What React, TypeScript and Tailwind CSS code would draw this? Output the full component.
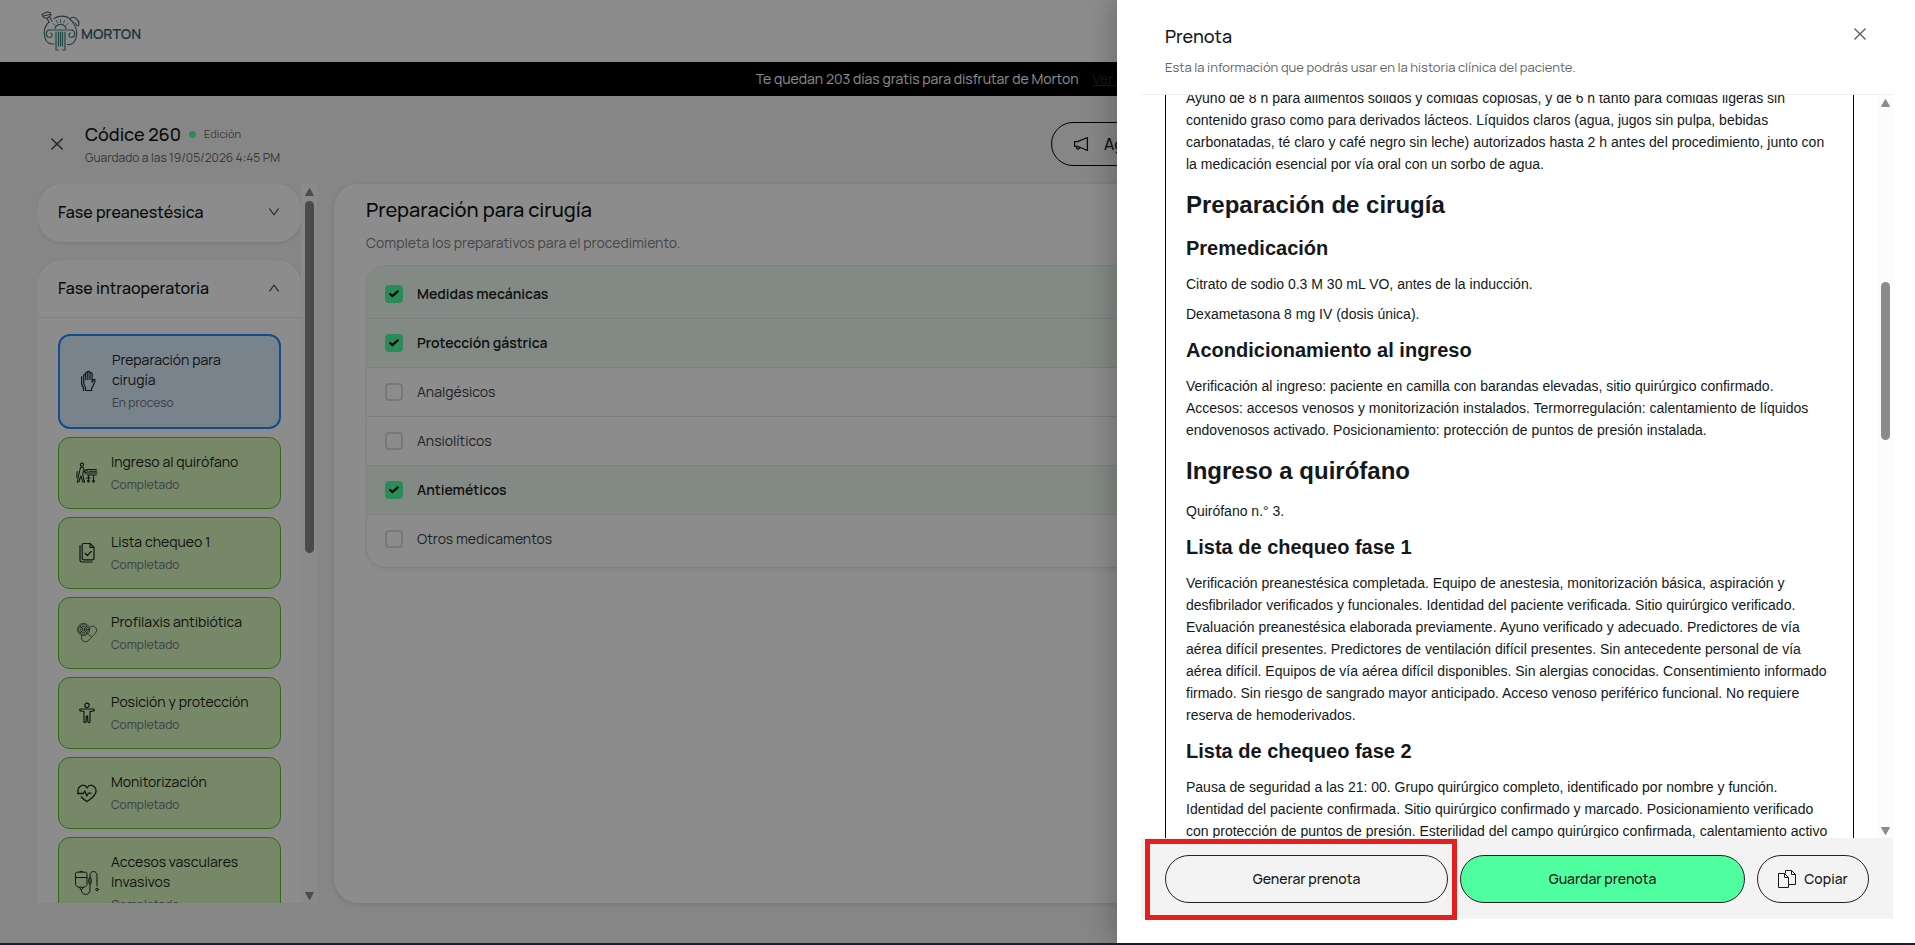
import { useState, type ReactNode } from 'react'
import { AiOutlineClose, AiOutlineDown, AiOutlineNotification, AiOutlineUp } from 'react-icons/ai'
import clsx from 'clsx'

type Step = { title: string; status: string; icon: ReactNode; active?: boolean }
type NoteBlock = { type: 'h1' | 'h2' | 'p'; text: string }

const steps: Step[] = [
  { title: 'Preparación para cirugía', status: 'En proceso', icon: <HandIcon />, active: true },
  { title: 'Ingreso al quirófano', status: 'Completado', icon: <StretcherIcon /> },
  { title: 'Lista chequeo 1', status: 'Completado', icon: <ChecklistIcon /> },
  { title: 'Profilaxis antibiótica', status: 'Completado', icon: <CapsuleIcon /> },
  { title: 'Posición y protección', status: 'Completado', icon: <BodyIcon /> },
  { title: 'Monitorización', status: 'Completado', icon: <HeartIcon /> },
  { title: 'Accesos vasculares Invasivos', status: 'Completado', icon: <DripIcon /> },
]

const initialOptions = [
  { label: 'Medidas mecánicas', checked: true },
  { label: 'Protección gástrica', checked: true },
  { label: 'Analgésicos', checked: false },
  { label: 'Ansiolíticos', checked: false },
  { label: 'Antieméticos', checked: true },
  { label: 'Otros medicamentos', checked: false },
]

const note: NoteBlock[] = [
  { type: 'p', text: 'Ayuno de 8 h para alimentos sólidos y comidas copiosas, y de 6 h tanto para comidas ligeras sin contenido graso como para derivados lácteos. Líquidos claros (agua, jugos sin pulpa, bebidas carbonatadas, té claro y café negro sin leche) autorizados hasta 2 h antes del procedimiento, junto con la medicación esencial por vía oral con un sorbo de agua.' },
  { type: 'h1', text: 'Preparación de cirugía' },
  { type: 'h2', text: 'Premedicación' },
  { type: 'p', text: 'Citrato de sodio 0.3 M 30 mL VO, antes de la inducción.' },
  { type: 'p', text: 'Dexametasona 8 mg IV (dosis única).' },
  { type: 'h2', text: 'Acondicionamiento al ingreso' },
  { type: 'p', text: 'Verificación al ingreso: paciente en camilla con barandas elevadas, sitio quirúrgico confirmado. Accesos: accesos venosos y monitorización instalados. Termorregulación: calentamiento de líquidos endovenosos activado. Posicionamiento: protección de puntos de presión instalada.' },
  { type: 'h1', text: 'Ingreso a quirófano' },
  { type: 'p', text: 'Quirófano n.° 3.' },
  { type: 'h2', text: 'Lista de chequeo fase 1' },
  { type: 'p', text: 'Verificación preanestésica completada. Equipo de anestesia, monitorización básica, aspiración y desfibrilador verificados y funcionales. Identidad del paciente verificada. Sitio quirúrgico verificado. Evaluación preanestésica elaborada previamente. Ayuno verificado y adecuado. Predictores de vía aérea difícil presentes. Predictores de ventilación difícil presentes. Sin antecedente personal de vía aérea difícil. Equipos de vía aérea difícil disponibles. Sin alergias conocidas. Consentimiento informado firmado. Sin riesgo de sangrado mayor anticipado. Acceso venoso periférico funcional. No requiere reserva de hemoderivados.' },
  { type: 'h2', text: 'Lista de chequeo fase 2' },
  { type: 'p', text: 'Pausa de seguridad a las 21: 00. Grupo quirúrgico completo, identificado por nombre y función. Identidad del paciente confirmada. Sitio quirúrgico confirmado y marcado. Posicionamiento verificado con protección de puntos de presión. Esterilidad del campo quirúrgico confirmada, calentamiento activo' },
]

function HandIcon() {
  return (
    <svg width="24" height="24" viewBox="0 0 24 24" fill="none" stroke="currentColor" strokeWidth="1.2" strokeLinecap="round" strokeLinejoin="round">
      <path d="M9.500 21.500v-3C8.300 17 7.700 15.500 7.700 13.700V6.500c0-1.500 2-1.500 2 0V11V4.200c0-1.500 2.100-1.500 2.100 0V10.500V3.400c0-1.500 2.200-1.500 2.200 0V10.500V4.800c0-1.500 2.100-1.500 2.100 0v8.400l1.300-2.200c.8-1.200 2.100-.5 1.700.7l-1.800 4.700c-.4 1-.9 1.600-1.600 2.200v2.900z" />
      <path d="M5.600 7.500v6.800c0 1.600.6 3.100 1.900 4.400v2.800" />
    </svg>
  )
}

function StretcherIcon() {
  return (
    <svg width="24" height="24" viewBox="0 0 24 24" fill="none" stroke="currentColor" strokeWidth="1.100" strokeLinecap="round" strokeLinejoin="round">
      <circle cx="7" cy="3.700" r="1.600" />
      <path d="M5.600 6.200L3.800 13.500l-1.500 7.500h1.500l2-6 2.200 6h1.500L7.700 13.300l.8-3.500 2.500 1.900M5.600 6.200h2.200l1.500 2.800 3.200 1M2.200 10.500l-.6 6" />
      <path d="M11.500 8.500h10M10 12h12M12 14h9.500M14 10.200h7.500M13.500 14v5.500M18.500 14v5.500M11.500 17h4" />
      <circle cx="13.500" cy="20.300" r=".9" />
      <circle cx="18.500" cy="20.300" r=".9" />
    </svg>
  )
}

function ChecklistIcon() {
  return (
    <svg width="24" height="24" viewBox="0 0 24 24" fill="none" stroke="currentColor" strokeWidth="1.200" strokeLinecap="round" strokeLinejoin="round">
      <path d="M8.500 2.500h6.500L19 6.500v11c0 .8-.5 1.300-1.300 1.300H8.500c-.8 0-1.300-.5-1.300-1.300V3.800c0-.8.5-1.300 1.300-1.300z" />
      <path d="M15 2.500v4h4M10 12.300l2.300 2.200 3.800-4M5 4.500v14.800c0 1 .7 1.700 1.700 1.700H17" />
    </svg>
  )
}

function CapsuleIcon() {
  return (
    <svg width="24" height="24" viewBox="0 0 24 24" fill="none" stroke="currentColor" strokeWidth=".7" strokeLinecap="round">
      <circle cx="8.500" cy="8.500" r="6" strokeWidth="1" strokeDasharray=".6 1.200" />
      <circle cx="8.500" cy="8.500" r="4.800" />
      <circle cx="8.500" cy="8.500" r="3.100" />
      <circle cx="8.500" cy="8.500" r="1.300" />
      <path d="M5.200 5.200l2.300 2.300M11.800 5.200L9.500 7.500M5.200 11.800l2.300-2.300M12.500 12.500l-3-3" />
      <path d="M14.500 6.500c2-2 4.900-1.800 6.300.1 1.300 1.900 1 4.100-.6 5.800l-6.700 7c-1.800 1.800-4.600 1.700-6.100 0-1.200-1.400-1.300-3.300-.4-4.800M12.500 12.500l4 3.600" />
    </svg>
  )
}

function BodyIcon() {
  return (
    <svg width="24" height="24" viewBox="0 0 24 24" fill="none" stroke="currentColor" strokeWidth="1.200" strokeLinecap="round" strokeLinejoin="round">
      <circle cx="12" cy="4.300" r="2.200" />
      <path d="M5.500 8h13c1.100 0 1.100 1.800 0 1.900l-3.500.6v10.300c0 1.200-2 1.200-2.100 0l-.3-5.600h-1.200l-.3 5.600c-.1 1.200-2.100 1.200-2.100 0V10.500L5.500 9.900c-1.100-.1-1.100-1.900 0-1.900z" />
    </svg>
  )
}

function HeartIcon() {
  return (
    <svg width="24" height="24" viewBox="0 0 24 24" fill="none" stroke="currentColor" strokeWidth="1.300" strokeLinecap="round" strokeLinejoin="round">
      <path d="M3.300 12.500C2.300 9 3.500 5 7 4.300c2.200-.4 3.900.7 5 2.500 1.100-1.800 2.800-2.900 5-2.500 3.500.7 4.800 4.700 3.500 8-1.300 3.200-4.500 5.700-8.500 8.200-2.300-1.500-4.300-2.900-5.800-4.500" />
      <path d="M2.500 12.500h5.800l1.500-2.500 2 5 1.600-2.800h2.600" />
    </svg>
  )
}

function DripIcon() {
  return (
    <svg width="24" height="24" viewBox="0 0 24 24" fill="none" stroke="currentColor" strokeWidth="1" strokeLinecap="round" strokeLinejoin="round">
      <path d="M.5 2.500c0-.8.500-1.300 1.300-1.300h8.900c.8 0 1.300.5 1.300 1.300v11c0 1.500-2 2.700-4 2.700H4.500c-2 0-4-1.200-4-2.700zM.5 6.500H12M5 .500h2.500M4.300 16.200l2 2.800 2-2.800" />
      <path d="M6.300 19c0 2.500 1.700 4.400 4.300 4.400s4.400-1.700 4.400-4.200V4c0-2 1.500-3.500 3.500-3.500S22 2 22 4v6M15 6.200c2 0 1.800 7 0 7-1.800 0-2-7 0-7M22 10v5" />
      <circle cx="22" cy="18.500" r="1.300" />
    </svg>
  )
}

function CopyIcon() {
  return (
    <svg width="18" height="18" viewBox="0 0 18 18" fill="none" stroke="currentColor" strokeWidth="1">
      <path d="M.5 3.500h6l4 4v10H.500zM6.500 3.500v4h4" />
      <path d="M7.500 3.500V.5h6l4 4v10h-7M13.500.5v4h4" />
    </svg>
  )
}

function Logo() {
  return (
    <a href="#" aria-label="Morton" className="flex items-center gap-px text-[#2f6470]">
      <svg width="40" height="42" viewBox="0 0 40 42" fill="none" strokeLinecap="round" strokeLinejoin="round">
        <g stroke="#4d6670" strokeWidth="1.100">
          <path d="M9 12C5 15.500 4 19 4.300 24c.4 5.500 3 9.500 7.700 10h2M33 13c3 3.500 4 7 3.500 12-.4 5-2.500 8.500-6.500 9.500h-2.500" />
          <path d="M14 8.500c5-3 11-3 16 0M9 12L7 8.500M2 4.500l5-2.500 3 .5 1 3-4 3-3.500-1zM3.500 6l6.500-1.500M10 7.500l2 3.500" />
          <path d="M30 9.500c1.500-2.500 4-3 6-1 2.500 2 3.500 5 2.500 7-1.500 1-2.500-1-3.500-2.500M30 9.500l3.500 3" />
        </g>
        <g stroke="#3d8078" strokeWidth="1.200">
          <path d="M8 20h25M10 20c-4.500 0-5 7-.5 7.500 3 0 3.500-4 1-4.500M31 20c4.500 0 5 7 .5 7.500-3 0-3.500-4-1-4.500" />
          <path d="M16 22v18M18.500 22v14M20.500 22v14M22.500 22v14M25 22v18M16 40h2.500M22.500 40h2.500" />
          <path d="M15 18.500c1.500-5.500 9.500-5.500 11 0" />
          <path d="M20.500 9.500v3M16.500 10.500l1 2.500M24.500 10.500l-1 2.500M13 13.500l2 2M28 13.500l-2 2" strokeWidth=".8" />
        </g>
      </svg>
      <span className="mt-1.5 text-sm font-semibold leading-5">MORTON</span>
    </a>
  )
}

function ScrollRail({ children }: { children: ReactNode }) {
  return (
    <div aria-hidden="true" className="flex w-4 shrink-0 flex-col items-center justify-between bg-[#fcfcfc] pb-[3px] pt-1 text-[#8b8b8b]">
      <svg width="9" height="8" viewBox="0 0 9 8"><path d="M4.500.5L8.500 7.500H.5z" fill="currentColor" stroke="currentColor" strokeLinejoin="round" /></svg>
      <div className="flex min-h-0 flex-1 flex-col py-[5px]">{children}</div>
      <svg width="9" height="8" viewBox="0 0 9 8"><path d="M4.500 7.500L.5.5h8z" fill="currentColor" stroke="currentColor" strokeLinejoin="round" /></svg>
    </div>
  )
}

function StepCard({ step }: { step: Step }) {
  return (
    <button
      type="button"
      className={clsx(
        'flex w-full items-center gap-3 rounded-xl px-4 pt-3.5 text-left',
        step.active ? 'border-2 border-[#1890ff] bg-[#dbeeff] pb-[15px]' : 'border border-[#52c41a] bg-[#d9f7be] pb-3.5',
      )}
    >
      <span className="flex w-6 shrink-0 justify-center text-[#1f2a24]">{step.icon}</span>
      <span className="min-w-0">
        <span className="block text-sm leading-5 text-[#1c2420]">{step.title}</span>
        <span className="mt-1 block text-xs leading-[18px] text-[#6b7280]">{step.status}</span>
      </span>
    </button>
  )
}

function Sidebar() {
  return (
    <aside className="flex w-[279px] shrink-0 overflow-hidden">
      <div className="min-w-0 flex-1 space-y-[18px] overflow-hidden">
        <section className="rounded-3xl bg-white shadow-[0_1px_4px_rgba(0,0,0,0.12)]">
          <button type="button" className="flex h-[58px] w-full items-center justify-between px-5 pb-0.5">
            <span className="text-base font-medium">Fase preanestésica</span>
            <AiOutlineDown size={14} className="text-[#444]" />
          </button>
        </section>
        <section className="rounded-3xl bg-white shadow-[0_1px_4px_rgba(0,0,0,0.12)]">
          <button type="button" className="flex h-[58px] w-full items-center justify-between border-b border-[#ececec] px-5 pb-0.5">
            <span className="text-base font-medium">Fase intraoperatoria</span>
            <AiOutlineUp size={14} className="text-[#444]" />
          </button>
          <div className="space-y-2 px-5 py-4">
            {steps.map(step => <StepCard key={step.title} step={step} />)}
          </div>
        </section>
      </div>
      <ScrollRail>
        <div className="h-[352px] w-[9px] rounded-full bg-[#888]" />
      </ScrollRail>
    </aside>
  )
}

function Preparation() {
  const [options, setOptions] = useState(initialOptions)

  function toggle(label: string) {
    setOptions(list => list.map(o => (o.label === label ? { ...o, checked: !o.checked } : o)))
  }

  return (
    <section className="min-w-0 flex-1 rounded-3xl bg-white px-8 py-[11px] shadow-[0_1px_6px_rgba(0,0,0,0.12)]">
      <h2 className="text-xl font-medium leading-[30px]">Preparación para cirugía</h2>
      <p className="mt-[7px] text-sm leading-[22px] text-[#808080]">Completa los preparativos para el procedimiento.</p>
      <div className="mt-[11px] overflow-hidden rounded-[20px] border border-[#e6ebe8] shadow-[0_2px_4px_rgba(0,0,0,0.06)]">
        {options.map(o => (
          <label
            key={o.label}
            className={clsx(
              'flex items-center gap-3.5 border-b border-[#e2e8e4] px-[18px] py-[14px] text-sm leading-5 first:pt-[18px] last:border-b-0 last:pb-[18px]',
              o.checked ? 'bg-[#eefbf3] font-semibold text-[#17201b]' : 'text-[#3b403d]',
            )}
          >
            <span className="grid size-[18px] place-items-center">
              <input
                type="checkbox"
                checked={o.checked}
                onChange={() => toggle(o.label)}
                className="col-start-1 row-start-1 size-[18px] appearance-none rounded-sm border-2 border-[#dadada] checked:border-[#4dff9d] checked:bg-[#4dff9d]"
              />
              {o.checked && (
                <svg width="12" height="10" viewBox="0 0 12 10" fill="none" className="pointer-events-none col-start-1 row-start-1">
                  <path d="M1.500 4.500l2.900 2.500 6-5.300" stroke="#000" strokeWidth="2.200" />
                </svg>
              )}
            </span>
            {o.label}
          </label>
        ))}
      </div>
    </section>
  )
}

function NoteDrawer({ onClose }: { onClose: () => void }) {
  return (
    <div className="absolute inset-0 flex justify-end bg-black/45">
      <div
        role="dialog"
        aria-labelledby="drawer-title"
        className="flex h-full w-[798px] max-w-full flex-col bg-white pb-6 pl-6 pr-[22px] shadow-[-6px_0_24px_rgba(0,0,0,0.22)]"
      >
        <header className="flex items-start justify-between border-b border-[#efefef] px-6 pb-[17px] pt-[22px]">
          <div>
            <h2 id="drawer-title" className="text-lg font-medium leading-7 text-[#141a17]">Prenota</h2>
            <p className="mt-[7px] text-[13px] leading-5 text-[#5f6663]">Esta la información que podrás usar en la historia clínica del paciente.</p>
          </div>
          <button type="button" aria-label="Cerrar" onClick={onClose} className="mt-[3px] text-[#666]">
            <AiOutlineClose size={18} />
          </button>
        </header>

        <div className="flex min-h-0 flex-1 justify-between overflow-hidden pl-6">
          <article className="-mt-2 w-[689px] border-x border-black px-5 font-['Liberation_Sans',Arial,sans-serif] text-[#14181a]">
            {note.map(block => {
              if (block.type === 'h1') return <h3 key={block.text} className="mb-[13px] mt-3.5 text-2xl font-bold leading-8">{block.text}</h3>
              if (block.type === 'h2') return <h4 key={block.text} className="mb-[11px] mt-[11px] text-xl font-bold leading-7">{block.text}</h4>
              return <p key={block.text} className="mb-2 text-sm leading-[22px]">{block.text}</p>
            })}
          </article>
          <ScrollRail>
            <div className="mt-[170px] h-[158px] w-[9px] rounded-full bg-[#8b8b8b]" />
          </ScrollRail>
        </div>

        <footer className="flex gap-3 bg-[#f3f3f3] px-6 pb-4 pt-[17px] text-[#141a17]">
          <div className="relative flex-1">
            <button type="button" className="h-12 w-full rounded-full border border-[#222] text-sm font-medium">Generar prenota</button>
            <div className="pointer-events-none absolute -bottom-[17px] -left-5 -right-[9px] -top-4 border-[5px] border-[#e51f1f]" />
          </div>
          <button type="button" className="h-12 flex-1 rounded-full border border-[#222] bg-[#4fff9f] text-sm font-medium">Guardar prenota</button>
          <button type="button" className="flex h-12 w-28 items-center justify-center gap-2 rounded-full border border-[#222] text-sm font-medium">
            <CopyIcon />
            Copiar
          </button>
        </footer>
      </div>
    </div>
  )
}

export default function App() {
  const [open, setOpen] = useState(true)

  return (
    <div className="flex h-screen flex-col overflow-hidden bg-[#f5f5f5] font-['Manrope','Inter',sans-serif] text-[#10140f]">
      <div className="relative flex min-h-0 flex-1 flex-col">
        <header className="flex h-[62px] shrink-0 items-center bg-white px-10">
          <Logo />
        </header>
        <div className="flex h-[34px] shrink-0 items-center justify-center gap-3.5 bg-black text-sm text-white">
          <span>Te quedan 203 días gratis para disfrutar de Morton</span>
          <a href="#" className="text-[#2a2a2a] underline">Ver planes</a>
        </div>

        <div className="flex h-[88px] shrink-0 items-center px-[38px] pt-2">
          <button type="button" aria-label="Salir" className="ml-2.5 text-[#444]">
            <AiOutlineClose size={18} />
          </button>
          <div className="ml-[19px]">
            <div className="flex items-center gap-2">
              <h1 className="text-lg font-medium leading-7">Códice 260</h1>
              <span className="size-[7px] rounded-full bg-[#4dff9d]" />
              <span className="text-[11px] text-[#666]">Edición</span>
            </div>
            <p className="text-xs leading-5 text-[#666]">Guardado a las 19/05/2026 4:45 PM</p>
          </div>
          <div className="ml-auto flex w-[826px]">
            <button type="button" className="flex h-11 items-center gap-3.5 rounded-full border border-black px-5 text-base font-medium">
              <AiOutlineNotification size={18} />
              Agregar evento
            </button>
          </div>
        </div>

        <main className="flex min-h-0 flex-1 gap-[17px] px-[38px] pb-10">
          <Sidebar />
          <Preparation />
        </main>

        {open && <NoteDrawer onClose={() => setOpen(false)} />}
      </div>
      <div className="h-0.5 shrink-0 bg-[#1c1c36]" />
    </div>
  )
}
